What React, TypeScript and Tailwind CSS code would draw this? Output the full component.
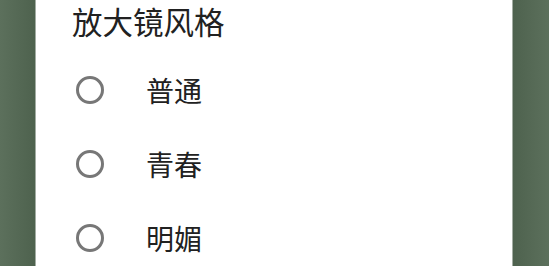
import React from 'react'

const options = ["普通", "青春", "明媚"]

const App = () => {
    return (
        <div className="flex h-[266px] w-[549px] overflow-hidden" style={{ fontFamily: '"Noto Sans CJK SC", "Noto Sans", sans-serif' }}>
            <div className="w-[35px] shrink-0 bg-gradient-to-r from-[#5c705c] to-[#4e624e]" />
            <div className="w-[478px] shrink-0 bg-white border-x border-[#a3ada3]">
                <div className="h-[53px] pt-[6px] pl-[36px]">
                    <h2 className="text-[30.5px] leading-[30px] text-[#212121]">放大镜风格</h2>
                </div>
                {
                    options.map((label, index) => (
                        <div className="flex h-[74px] items-center pl-[40px]" key={index}>
                            <div className="h-[28px] w-[28px] shrink-0 rounded-full border-[3px] border-[#777777]" />
                            <span className="ml-[42px] text-[28px] leading-[28px] text-[#212121]">{label}</span>
                        </div>
                    ))
                }
            </div>
            <div className="flex-1 bg-gradient-to-r from-[#4e624e] to-[#5c705c]" />
        </div>
    )
}

export default App
